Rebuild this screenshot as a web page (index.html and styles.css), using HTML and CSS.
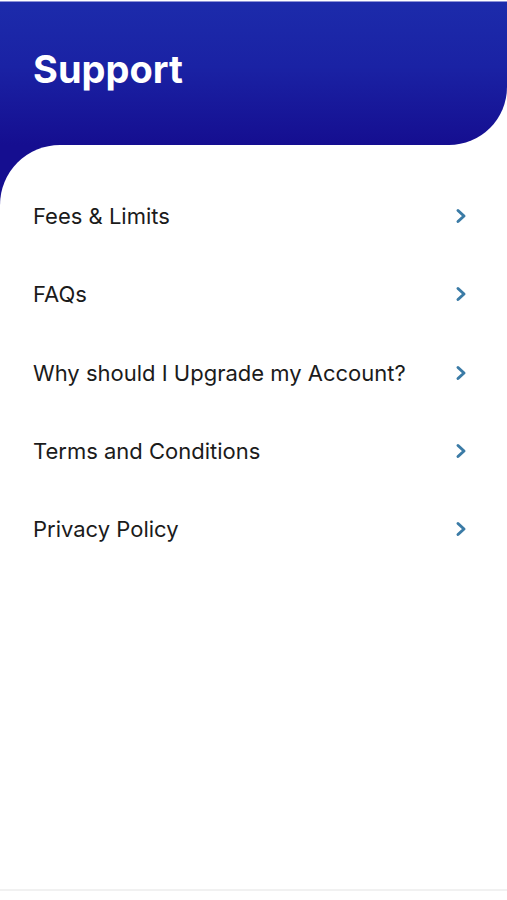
FILE: index.html
```html
<!DOCTYPE html>
<html lang="en">
<head>
<meta charset="utf-8">
<title>Support</title>
<link rel="stylesheet" href="styles.css">
</head>
<body>
<div class="app">
  <header class="header">
    <h1 class="title">Support</h1>
  </header>
  <div class="content-wrap">
    <main class="content">
      <ul class="menu">
        <li class="menu-item"><span class="label">Fees &amp; Limits</span><svg class="chev" viewBox="0 0 12 16" width="12" height="16"><path d="M3 2.5 L9 8 L3 13.5" fill="none" stroke="#3b7ba6" stroke-width="3" stroke-linecap="round" stroke-linejoin="round"/></svg></li>
        <li class="menu-item"><span class="label">FAQs</span><svg class="chev" viewBox="0 0 12 16" width="12" height="16"><path d="M3 2.5 L9 8 L3 13.5" fill="none" stroke="#3b7ba6" stroke-width="3" stroke-linecap="round" stroke-linejoin="round"/></svg></li>
        <li class="menu-item"><span class="label">Why should I Upgrade my Account?</span><svg class="chev" viewBox="0 0 12 16" width="12" height="16"><path d="M3 2.5 L9 8 L3 13.5" fill="none" stroke="#3b7ba6" stroke-width="3" stroke-linecap="round" stroke-linejoin="round"/></svg></li>
        <li class="menu-item"><span class="label">Terms and Conditions</span><svg class="chev" viewBox="0 0 12 16" width="12" height="16"><path d="M3 2.5 L9 8 L3 13.5" fill="none" stroke="#3b7ba6" stroke-width="3" stroke-linecap="round" stroke-linejoin="round"/></svg></li>
        <li class="menu-item"><span class="label">Privacy Policy</span><svg class="chev" viewBox="0 0 12 16" width="12" height="16"><path d="M3 2.5 L9 8 L3 13.5" fill="none" stroke="#3b7ba6" stroke-width="3" stroke-linecap="round" stroke-linejoin="round"/></svg></li>
      </ul>
    </main>
  </div>
  <footer class="tabbar"></footer>
</div>
</body>
</html>
```
FILE: styles.css
```css
* { box-sizing: border-box; }
html, body { margin: 0; padding: 0; background: #ffffff; }
body { font-family: "Inter", "Liberation Sans", Arial, sans-serif; }

.app {
  height: 900px;
  display: flex;
  flex-direction: column;
  padding-top: 1px;
  background: #ffffff;
}

.header {
  height: 144px;
  flex: 0 0 auto;
  border-top: 1px solid #8e93d8;
  background: linear-gradient(180deg, #1c2bab 0%, #1a22a4 45%, #150e90 100%);
  border-bottom-right-radius: 58px;
  padding: 44px 0 0 33px;
}

.title {
  margin: 0;
  color: #ffffff;
  font-size: 38px;
  font-weight: 700;
  line-height: 46px;
  letter-spacing: 0;
}

.content-wrap {
  flex: 1 1 auto;
  display: flex;
  background: #150e90;
}

.content {
  flex: 1 1 auto;
  background: #ffffff;
  border-top-left-radius: 60px;
  padding-top: 32px;
}

.menu {
  list-style: none;
  margin: 0;
  padding: 0;
}

.menu-item {
  height: 78.3px;
  display: flex;
  align-items: center;
  justify-content: space-between;
  padding: 0 40px 0 33px;
}

.label {
  color: #1b1b1b;
  font-size: 22px;
  font-weight: 400;
}

.chev { display: block; }

.tabbar {
  flex: 0 0 11px;
  border-top: 2px solid #f1f1f1;
  background: #ffffff;
}
```
